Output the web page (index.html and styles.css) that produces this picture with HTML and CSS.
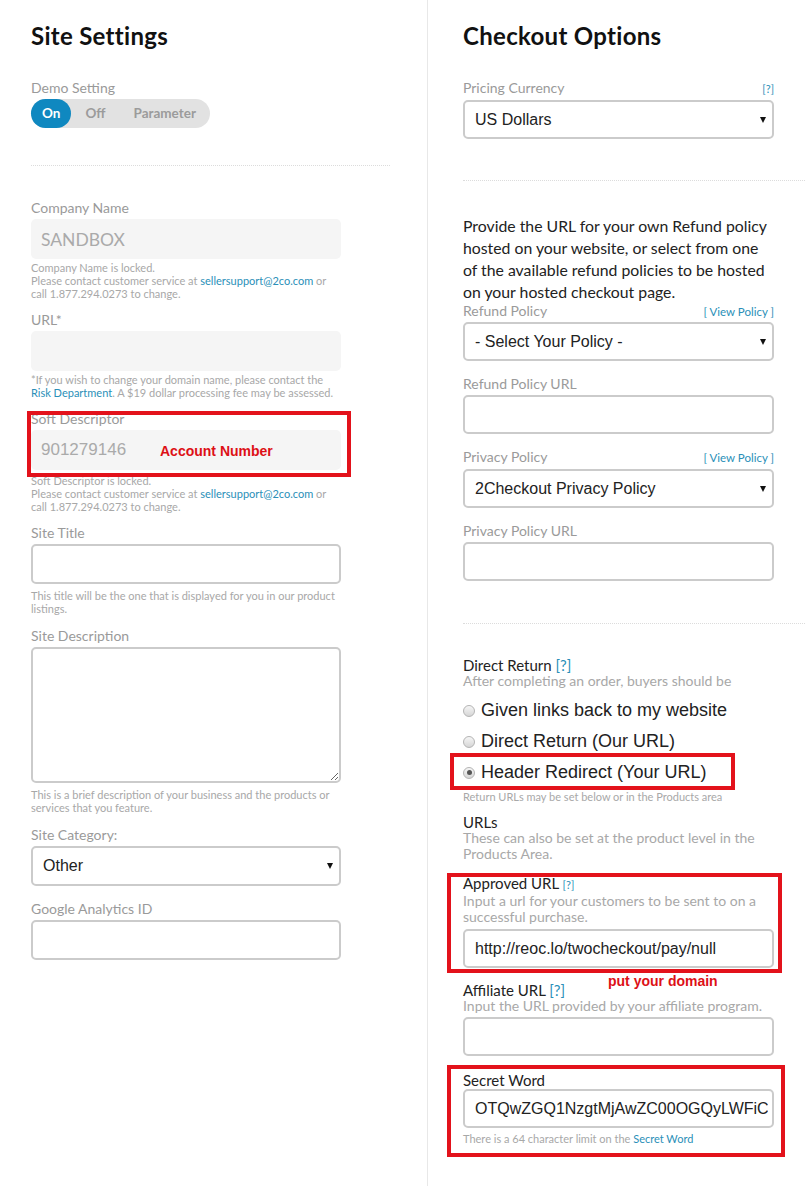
FILE: index.html
```html
<!DOCTYPE html>
<html lang="en">
<head>
<meta charset="utf-8">
<title>Site Settings</title>
<link rel="stylesheet" href="styles.css">
</head>
<body>
<div class="page">
  <section class="col col-left">
    <h1 class="title">Site Settings</h1>

    <div class="block-demo">
      <div class="label">Demo Setting</div>
      <div class="toggle">
        <span class="toggle-opt is-on">On</span>
        <span class="toggle-opt">Off</span>
        <span class="toggle-opt">Parameter</span>
      </div>
    </div>

    <hr class="divider divider-left">

    <div class="field field-first">
      <div class="label">Company Name</div>
      <div class="input locked"><span class="locked-value">SANDBOX</span></div>
      <div class="help">Company Name is locked.<br>Please contact customer service at <a class="link" href="#">sellersupport@2co.com</a> or<br>call 1.877.294.0273 to change.</div>
    </div>

    <div class="field">
      <div class="label">URL*</div>
      <div class="input locked"></div>
      <div class="help">*If you wish to change your domain name, please contact the<br><a class="link" href="#">Risk Department</a>. A $19 dollar processing fee may be assessed.</div>
    </div>

    <div class="field">
      <div class="annot annot-soft">
        <div class="label">Soft Descriptor</div>
        <div class="input locked"><span class="locked-num">901279146</span><span class="note note-account">Account Number</span></div>
      </div>
      <div class="help help-soft">Soft Descriptor is locked.<br>Please contact customer service at <a class="link" href="#">sellersupport@2co.com</a> or<br>call 1.877.294.0273 to change.</div>
    </div>

    <div class="field field-bordered">
      <div class="label">Site Title</div>
      <input class="input box" type="text">
      <div class="help">This title will be the one that is displayed for you in our product<br>listings.</div>
    </div>

    <div class="field field-bordered">
      <div class="label">Site Description</div>
      <textarea class="input box textarea"></textarea>
      <div class="help">This is a brief description of your business and the products or<br>services that you feature.</div>
    </div>

    <div class="field field-nohelp">
      <div class="label">Site Category:</div>
      <div class="input box select"><span>Other</span><span class="caret"></span></div>
    </div>

    <div class="field">
      <div class="label">Google Analytics ID</div>
      <input class="input box" type="text">
    </div>
  </section>

  <section class="col col-right">
    <h1 class="title">Checkout Options</h1>

    <div class="block-demo block-currency">
      <div class="label label-row"><span>Pricing Currency</span><a class="link qmark" href="#">[?]</a></div>
      <div class="input box select"><span>US Dollars</span><span class="caret"></span></div>
    </div>

    <hr class="divider divider-right divider-top">

    <p class="para">Provide the URL for your own Refund policy<br>hosted on your website, or select from one<br>of the available refund policies to be hosted<br>on your hosted checkout page.</p>

    <div class="rfield rfield-first">
      <div class="label label-row"><span>Refund Policy</span><a class="link viewpol" href="#">[ View Policy ]</a></div>
      <div class="input box select select-tight"><span>- Select Your Policy -</span><span class="caret"></span></div>
    </div>

    <div class="rfield">
      <div class="label">Refund Policy URL</div>
      <input class="input box" type="text">
    </div>

    <div class="rfield">
      <div class="label label-row"><span>Privacy Policy</span><a class="link viewpol" href="#">[ View Policy ]</a></div>
      <div class="input box select"><span>2Checkout Privacy Policy</span><span class="caret"></span></div>
    </div>

    <div class="rfield">
      <div class="label">Privacy Policy URL</div>
      <input class="input box" type="text">
    </div>

    <hr class="divider divider-right divider-mid">

    <div class="return">
      <div class="dark-label">Direct Return <a class="link" href="#">[?]</a></div>
      <div class="subtitle">After completing an order, buyers should be</div>
      <div class="radios">
        <label class="radio-row"><span class="radio"></span>Given links back to my website</label>
        <label class="radio-row"><span class="radio"></span>Direct Return (Our URL)</label>
        <label class="radio-row annot annot-radio"><span class="radio is-checked"></span>Header Redirect (Your URL)</label>
      </div>
      <div class="help help-return">Return URLs may be set below or in the Products area</div>
    </div>

    <div class="urls">
      <div class="dark-label">URLs</div>
      <div class="subtitle">These can also be set at the product level in the<br>Products Area.</div>
    </div>

    <div class="rfield-url annot annot-approved">
      <div class="dark-label">Approved URL <a class="link qsmall" href="#">[?]</a></div>
      <div class="subtitle">Input a url for your customers to be sent to on a<br>successful purchase.</div>
      <input class="input box url-input" type="text" value="http://reoc.lo/twocheckout/pay/null">
      <span class="note note-domain">put your domain</span>
    </div>

    <div class="rfield-aff">
      <div class="dark-label">Affiliate URL <a class="link" href="#">[?]</a></div>
      <div class="subtitle">Input the URL provided by your affiliate program.</div>
      <input class="input box" type="text">
    </div>

    <div class="rfield-secret annot annot-secret">
      <div class="dark-label">Secret Word</div>
      <input class="input box secret-input" type="text" value="OTQwZGQ1NzgtMjAwZC00OGQyLWFiCzQ4LTk2MjRmYzE5MDk0">
      <div class="help help-secret">There is a 64 character limit on the <a class="link" href="#">Secret Word</a></div>
    </div>
  </section>
</div>
</body>
</html>
```

FILE: styles.css
```css
*, *::before, *::after { box-sizing: border-box; }

body {
  margin: 0;
  background: #fff;
  color: #222;
  font-family: Lato, "Open Sans", sans-serif;
}

.page {
  display: grid;
  grid-template-columns: 428px 1fr;
  min-height: 1186px;
}

.col-left {
  border-right: 1px solid #e8e8e8;
  padding: 22px 0 0 31px;
}

.col-right {
  padding: 22px 0 0 35px;
}

.title {
  margin: 0;
  font-size: 24px;
  line-height: 28px;
  font-weight: 700;
  color: #111;
  letter-spacing: 0.3px;
}

.label {
  font-size: 14px;
  line-height: 16px;
  color: #9a9a9a;
}

.label-row {
  width: 311px;
  display: flex;
  justify-content: space-between;
  align-items: baseline;
}

.link {
  color: #2a8fb8;
  text-decoration: none;
}

.qmark { font-size: 11px; }
.viewpol { font-size: 11.5px; }
.qsmall { font-size: 11px; }

.block-demo { margin-top: 30px; }
.block-currency { width: 311px; }

.toggle {
  margin-top: 3px;
  display: inline-flex;
  align-items: center;
  height: 29px;
  background: #e2e2e2;
  border-radius: 15px;
}

.toggle-opt {
  height: 29px;
  line-height: 29px;
  padding: 0 14px;
  font-size: 13.5px;
  font-weight: 700;
  color: #9b9b9b;
  border-radius: 15px;
}

.toggle-opt.is-on {
  padding: 0 11px;
  background: #0f88c0;
  color: #fff;
}

.divider {
  border: 0;
  border-top: 1px dotted #dcdcdc;
  margin: 0;
  height: 0;
}

.divider-left { margin-top: 37px; width: 359px; }
.divider-right { width: 342px; }
.divider-top { margin-top: 41px; }
.divider-mid { margin-top: 42px; }

.field { margin-bottom: 12px; width: 310px; }
.field-first { margin-top: 34px; }
.field-bordered { margin-bottom: 13px; }
.field-nohelp { margin-bottom: 15px; }

.input {
  display: block;
  width: 100%;
  height: 40px;
  margin: 3px 0 0;
  border-radius: 5px;
  font-family: "Liberation Sans", Arial, sans-serif;
  font-size: 16px;
  color: #222;
  outline: none;
}

.col-right .input { height: 39px; }

.locked {
  background: #f5f5f5;
  border: 0;
  display: flex;
  align-items: center;
  padding: 0 10px;
}

.locked-value {
  font-family: Lato, sans-serif;
  font-size: 17.5px;
  color: #aaa;
}

.locked-num {
  font-family: "Liberation Sans", Arial, sans-serif;
  font-size: 17px;
  color: #aaa;
}

.box {
  background: #fff;
  border: 2px solid #cbcbcb;
  padding: 0 10px;
}

.textarea {
  height: 136px;
  resize: both;
  padding: 8px 10px;
}

.select {
  display: flex;
  align-items: center;
  justify-content: space-between;
  padding: 0 6px 0 10px;
}

.caret {
  width: 0;
  height: 0;
  border-left: 3.5px solid transparent;
  border-right: 3.5px solid transparent;
  border-top: 6px solid #111;
}

.help {
  margin-top: 2px;
  font-size: 11px;
  line-height: 13px;
  color: #a8a8a8;
}

.field-bordered .help { margin-top: 5px; }
.help-soft { margin-top: 4px; }

/* annotations */
.annot { position: relative; }
.annot::after {
  content: "";
  position: absolute;
  border: 4px solid #e3121b;
  pointer-events: none;
}

.annot-soft::after { top: 0; left: -4px; right: -10px; bottom: -7px; }

.note {
  position: absolute;
  font-family: "Liberation Sans", Arial, sans-serif;
  font-weight: 700;
  font-size: 14px;
  line-height: 16px;
  color: #dd1016;
  white-space: nowrap;
}

.note-account { left: 129px; top: 32px; }

/* right column */
.select-tight { margin-top: 2px; }

.para {
  margin: 34px 0 0;
  width: 340px;
  font-size: 15.8px;
  line-height: 22px;
  color: #222;
}

.rfield { width: 311px; margin-top: 15px; }
.rfield-first { margin-top: 0; }

.return { margin-top: 33px; width: 311px; }

.dark-label {
  font-size: 15px;
  line-height: 16px;
  color: #222;
}

.subtitle {
  font-size: 14px;
  line-height: 16px;
  color: #a8a8a8;
}

.radios { margin-top: 6px; }

.radio-row {
  display: flex;
  align-items: center;
  height: 31px;
  font-family: "Liberation Sans", Arial, sans-serif;
  font-size: 18px;
  color: #222;
}

.radio {
  width: 12px;
  height: 12px;
  margin-right: 6px;
  border-radius: 50%;
  border: 1px solid #b4b4b4;
  background: linear-gradient(#f6f6f6, #d6d6d6);
  display: flex;
  align-items: center;
  justify-content: center;
}

.radio.is-checked::before {
  content: "";
  width: 5px;
  height: 5px;
  border-radius: 50%;
  background: #555;
}

.annot-radio::after { top: -4px; bottom: -2px; left: -13px; width: 285px; }

.help-return { margin-top: 2px; }

.urls { margin-top: 11px; width: 311px; }

.rfield-url { margin-top: 13px; width: 311px; }
.annot-approved::after { top: -2px; left: -16px; right: -8px; bottom: -5px; }
.url-input { margin-top: 4px; }
.note-domain { left: 145px; top: 98px; }

.rfield-aff { margin-top: 14px; width: 311px; }

.rfield-secret { margin-top: 16px; width: 311px; }
.annot-secret::after { top: -7px; left: -16px; right: -11px; bottom: -12px; }
.secret-input { margin-top: 1px; padding: 0 4px 0 10px; }
.help-secret { margin-top: 4px; }
```
